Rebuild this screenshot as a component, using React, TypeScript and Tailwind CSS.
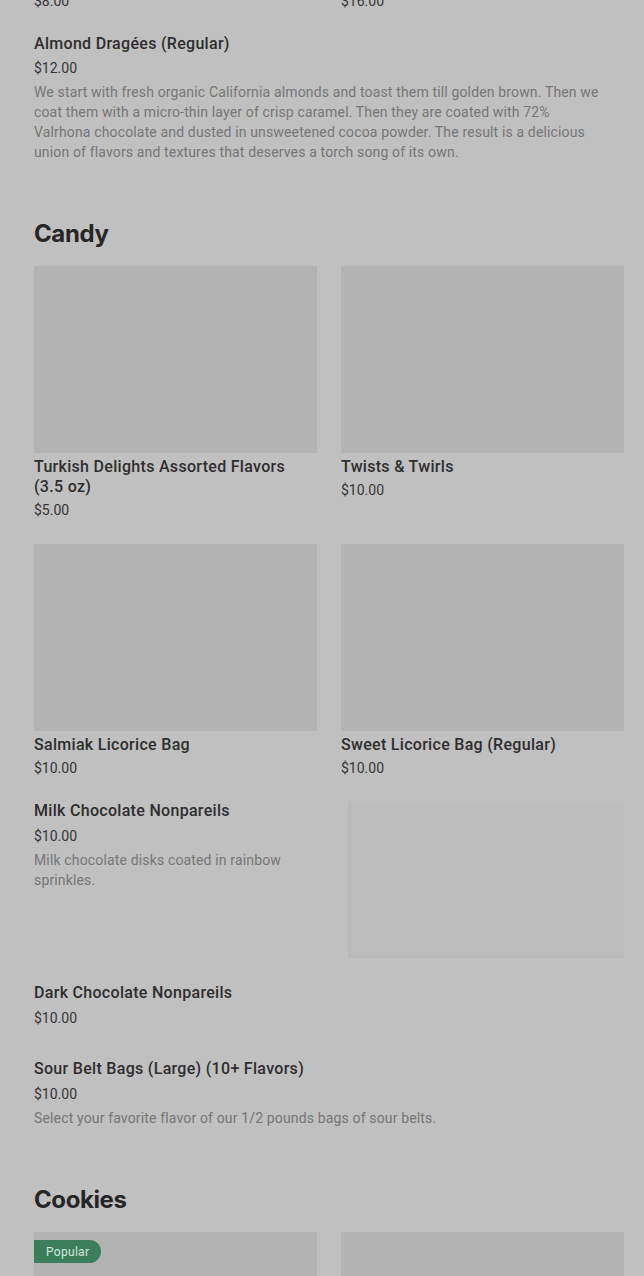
import React from "react";

const titleCls = "text-[16px] leading-[20px] font-medium text-[#2e2e2e] tracking-[0.3px]";
const priceCls = "text-[14px] leading-[20px] text-[#353535]";
const descCls = "text-[14px] leading-[20px] text-[#767676] tracking-[0.15px]";
const headCls = "text-[24px] leading-[32px] font-bold text-[#262626] tracking-[-0.4px]";

function Card({ title, price, badge }: { title: string; price?: string; badge?: boolean }) {
  return (
    <div className="flex flex-col">
      <div className="relative h-[187px] bg-[#b3b3b3]">
        {badge && (
          <div className="absolute left-0 top-2 h-[23px] px-[12px] flex items-center rounded-r-full bg-[#3b7e5c] text-[12px] tracking-[0.3px] text-[#d3e8dc]">
            Popular
          </div>
        )}
      </div>
      {title && <div className={`${titleCls} mt-1 pr-[12px]`}>{title}</div>}
      {price && <div className={`${priceCls} mt-[3px]`}>{price}</div>}
    </div>
  );
}

export default function App() {
  return (
    <div
      className="min-h-screen bg-[#c0c0c0] pl-[34px] pr-[20px] overflow-hidden"
      style={{ fontFamily: "Roboto, 'Liberation Sans', sans-serif" }}
    >
      <div className="grid grid-cols-2 gap-x-6 -mt-[9px]">
        <div className={priceCls}>$8.00</div>
        <div className={priceCls}>$16.00</div>
      </div>

      <div className="mt-[23px]">
        <div className={titleCls}>Almond Dragées (Regular)</div>
        <div className={`${priceCls} mt-[4px]`}>$12.00</div>
        <div className={`${descCls} mt-[4px] pr-[18px]`}>
          We start with fresh organic California almonds and toast them till golden brown. Then we coat them with a
          micro-thin layer of crisp caramel. Then they are coated with 72% Valrhona chocolate and dusted in unsweetened
          cocoa powder. The result is a delicious union of flavors and textures that deserves a torch song of its own.
        </div>
      </div>

      <h2 className={`${headCls} mt-[56px]`} style={{ fontFamily: "Inter, Roboto, sans-serif" }}>
        Candy
      </h2>

      <div className="grid grid-cols-2 gap-x-6 gap-y-6 mt-4">
        <Card title="Turkish Delights Assorted Flavors (3.5 oz)" price="$5.00" />
        <Card title="Twists & Twirls" price="$10.00" />
        <Card title="Salmiak Licorice Bag" price="$10.00" />
        <Card title="Sweet Licorice Bag (Regular)" price="$10.00" />
      </div>

      <div className="flex gap-6 mt-[23px]">
        <div className="flex-1">
          <div className={titleCls}>Milk Chocolate Nonpareils</div>
          <div className={`${priceCls} mt-[5px]`}>$10.00</div>
          <div className={`${descCls} mt-[4px] pr-4`}>Milk chocolate disks coated in rainbow sprinkles.</div>
        </div>
        <div className="w-[276px] h-[155px] mt-[2px] bg-[#bdbdbd] border-l-[3px] border-b-[3px] border-[#b9b9b9]" />
      </div>

      <div className="mt-[25px]">
        <div className={titleCls}>Dark Chocolate Nonpareils</div>
        <div className={`${priceCls} mt-[5px]`}>$10.00</div>
      </div>

      <div className="mt-[31px]">
        <div className={titleCls}>Sour Belt Bags (Large) (10+ Flavors)</div>
        <div className={`${priceCls} mt-[5px]`}>$10.00</div>
        <div className={`${descCls} mt-[4px]`}>Select your favorite flavor of our 1/2 pounds bags of sour belts.</div>
      </div>

      <h2 className={`${headCls} mt-[56px]`} style={{ fontFamily: "Inter, Roboto, sans-serif" }}>
        Cookies
      </h2>

      <div className="grid grid-cols-2 gap-x-6 mt-4">
        <Card title="" badge />
        <Card title="" />
      </div>
    </div>
  );
}
